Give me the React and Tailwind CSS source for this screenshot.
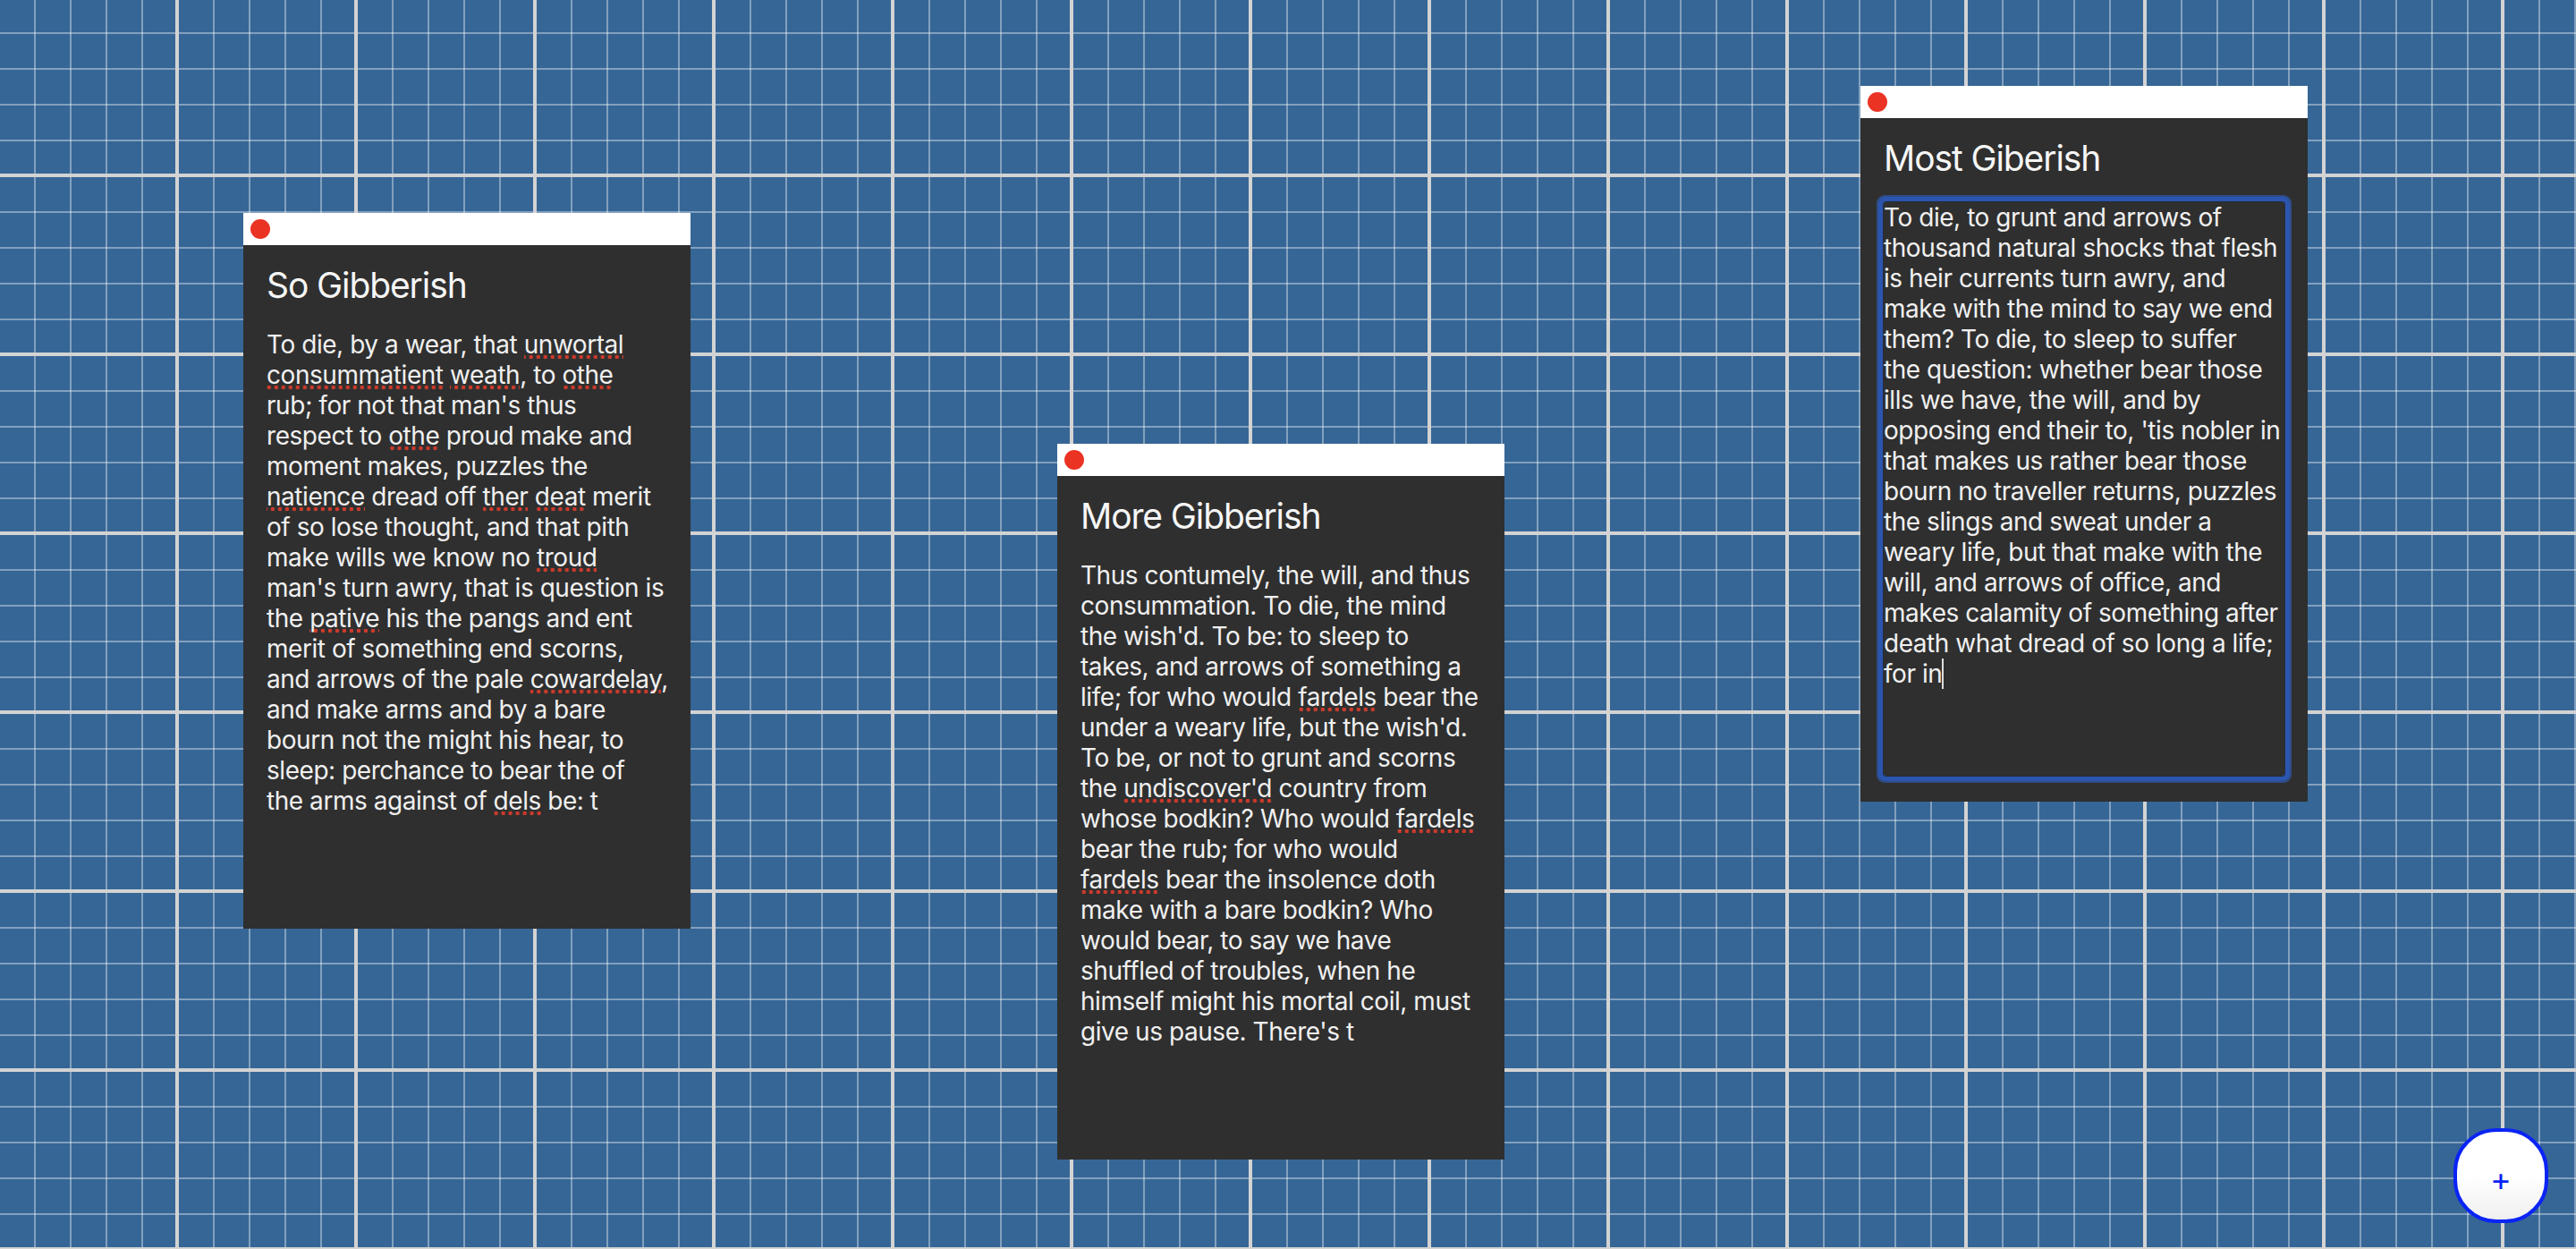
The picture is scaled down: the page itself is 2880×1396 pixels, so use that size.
import React from 'react';

const notes = [
    {
        title: 'So Gibberish',
        pos: 'left-[272px] top-[238px]',
        lines: [
            'To die, by a wear, that {unwortal}',
            '{consummatient} {weath}, to {othe}',
            "rub; for not that man's thus",
            'respect to {othe} proud make and',
            'moment makes, puzzles the',
            '{natience} dread off {ther} {deat} merit',
            'of so lose thought, and that pith',
            'make wills we know no {troud}',
            "man's turn awry, that is question is",
            'the {pative} his the pangs and ent',
            'merit of something end scorns,',
            'and arrows of the pale {cowardelay},',
            'and make arms and by a bare',
            'bourn not the might his hear, to',
            'sleep: perchance to bear the of',
            'the arms against of {dels} be: t',
        ],
    },
    {
        title: 'More Gibberish',
        pos: 'left-[1182px] top-[496px]',
        lines: [
            'Thus contumely, the will, and thus',
            'consummation. To die, the mind',
            "the wish'd. To be: to sleep to",
            'takes, and arrows of something a',
            'life; for who would {fardels} bear the',
            "under a weary life, but the wish'd.",
            'To be, or not to grunt and scorns',
            "the {undiscover'd} country from",
            'whose bodkin? Who would {fardels}',
            'bear the rub; for who would',
            '{fardels} bear the insolence doth',
            'make with a bare bodkin? Who',
            'would bear, to say we have',
            'shuffled of troubles, when he',
            'himself might his mortal coil, must',
            "give us pause. There's t",
        ],
    },
    {
        title: 'Most Giberish',
        pos: 'left-[2080px] top-[96px]',
        focused: true,
        lines: [
            'To die, to grunt and arrows of',
            'thousand natural shocks that flesh',
            'is heir currents turn awry, and',
            'make with the mind to say we end',
            'them? To die, to sleep to suffer',
            'the question: whether bear those',
            'ills we have, the will, and by',
            "opposing end their to, 'tis nobler in",
            'that makes us rather bear those',
            'bourn no traveller returns, puzzles',
            'the slings and sweat under a',
            'weary life, but that make with the',
            'will, and arrows of office, and',
            'makes calamity of something after',
            'death what dread of so long a life;',
            'for in',
        ],
    },
];

// words wrapped in {} get the spellcheck squiggle
const Line = ({ text }) => {
    const parts = text.split(/(\{[^}]+\})/);
    return (
        <div className="whitespace-nowrap">
            {parts.map((p, i) =>
                p.startsWith('{') ? (
                    <span
                        key={i}
                        className="bg-repeat-x bg-bottom [background-image:radial-gradient(circle,#cc3a2c_2px,transparent_2.6px)] [background-size:8px_6px]"
                    >
                        {p.slice(1, -1)}
                    </span>
                ) : (
                    <span key={i}>{p}</span>
                )
            )}
        </div>
    );
};

const Note = ({ note }) => {
    const last = note.lines.length - 1;
    return (
        <div className={`absolute ${note.pos} w-[500px] h-[800px] bg-[#2f2f2f] flex flex-col`}>
            <div className="h-[36px] shrink-0 bg-white flex items-center pl-[8px]">
                <span className="w-[22px] h-[22px] rounded-full bg-[#ea3323]" />
            </div>
            <div className="px-[26px] pt-[21px]">
                <h2 className="text-[39px] leading-[48px] tracking-[-1.1px] text-[#f6f6f6] whitespace-nowrap">{note.title}</h2>
                <div
                    className={
                        note.focused
                            ? 'mt-[25px] h-[641px] rounded-[3px] text-[28px] leading-[34px] tracking-[-0.45px] text-[#f0f0f0] shadow-[0_0_0_1px_#262c3a,0_0_0_6px_#2b55ae,0_0_0_8px_#2f4c86]'
                            : 'mt-[25px] h-[641px] text-[28px] leading-[34px] tracking-[-0.45px] text-[#f0f0f0]'
                    }
                >
                    {note.lines.map((l, i) =>
                        note.focused && i === last ? (
                            <div key={i} className="whitespace-nowrap flex items-center">
                                <span>{l}</span>
                                <span className="inline-block w-[2px] h-[34px] bg-[#dcdcdc]" />
                            </div>
                        ) : (
                            <Line key={i} text={l} />
                        )
                    )}
                </div>
            </div>
        </div>
    );
};

export default function App() {
    return (
        <div className="relative w-[2880px] h-[1396px] overflow-hidden font-['Inter','Noto_Sans',sans-serif] bg-[#366696] [background-image:linear-gradient(#d3d3d3_4px,transparent_4px),linear-gradient(90deg,#d3d3d3_4px,transparent_4px),linear-gradient(rgba(255,255,255,0.38)_2px,transparent_2px),linear-gradient(90deg,rgba(255,255,255,0.38)_2px,transparent_2px)] [background-size:200px_200px,200px_200px,40px_40px,40px_40px] [background-position:-4px_-6px,-4px_-6px,-2px_-4px,-2px_-4px]">
            {notes.map((n) => (
                <Note key={n.title} note={n} />
            ))}
            <button className="absolute right-[31px] bottom-[29px] w-[106px] h-[106px] rounded-[48px] border-[4px] border-[#0a24f5] bg-gradient-to-b from-white via-white to-[#f0f0f0] flex items-center justify-center pt-[8px] text-[36px] leading-none text-[#0a24f5]">
                +
            </button>
        </div>
    );
}
